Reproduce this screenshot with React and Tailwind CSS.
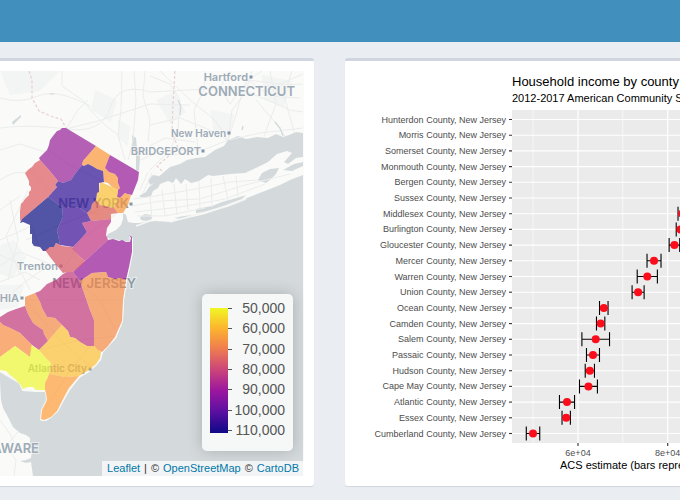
const counties = [
  { name: "Sussex", fill: "#961e98", d: "60,130 62,128 66,128 96,146 83,161 82,165 75,174 71,180 68,181 63,183 58,181 49,170 40,160 39,158 43,154 47,150 49,145 50,140 53,136 57,131" },
  { name: "Passaic", fill: "#fb9639", d: "96,146 110,155 105,168 109,172 115,174 118,178 118,183 120,188 118,190 112,187 108,183 104,182 103,171 97,169 92,166 88,164 84,166 82,165 83,161" },
  { name: "Bergen", fill: "#941797", d: "110,155 139,172 138,180 132,195 127,194 125,193 120,198 117,197 118,190 120,188 118,183 118,178 115,174 109,172 105,168" },
  { name: "Hudson", fill: "#fb9639", d: "125,193 127,194 131,195 128,205 123,213 118,213 114,208 117,202 118,197 120,198" },
  { name: "Essex", fill: "#fbbe35", d: "100,182 105,184 112,187 118,190 117,197 118,197 117,202 114,208 108,207 100,205 96,200 97,193 99,192" },
  { name: "Union", fill: "#dd5b4e", d: "92,204 96,200 100,205 108,207 114,208 118,213 111,214 111,219 91,221 87,213 91,209" },
  { name: "Morris", fill: "#2c0e95", d: "82,165 84,166 88,164 92,166 97,169 103,171 104,182 99,183 99,192 97,193 96,200 92,204 91,209 87,213 80,208 63,207 62,207 48,197 57,187 55,185 58,181 63,183 68,181 71,180 75,174" },
  { name: "Somerset", fill: "#390b96", d: "62,207 63,207 80,208 87,213 91,221 82,223 87,232 78,242 73,247 60,245 57,230 63,217" },
  { name: "Hunterdon", fill: "#0a0d81", d: "48,197 62,207 63,217 57,230 60,245 56,243 54,247 50,247 46,251 43,251 40,247 34,246 32,243 32,234 30,234 30,225 23,222 20,223 22,219 35,208" },
  { name: "Warren", fill: "#dd5a61", d: "40,160 49,170 58,181 55,185 57,187 48,197 35,208 20,221 20,211 21,204 23,202 25,199 29,195 29,192 31,190 31,187 29,185 29,181 27,177 25,173 29,169 32,167 35,163" },
  { name: "Middlesex", fill: "#c13383", d: "82,223 91,221 111,219 111,222 107,228 106,235 108,240 85,261 78,255 72,248 78,242 87,232" },
  { name: "Monmouth", fill: "#941797", d: "108,240 113,239 119,241 122,240 126,242 130,242 131,238 129,235 132,237 132,252 129,267 126,280 121,278 115,279 108,277 106,272 92,273 80,281 73,272 85,261" },
  { name: "Mercer", fill: "#d65462", d: "45,250 50,247 54,247 56,243 60,245 62,246 72,247 78,255 85,261 83,264 73,272 67,272 63,273 58,267 50,257" },
  { name: "Burlington", fill: "#c1387c", d: "67,272 73,272 80,281 90,310 94,320 94,346 87,346 80,342 75,338 70,337 68,331 62,325 55,318 47,317 42,308 40,302 35,293 40,291 47,284 56,280 63,274" },
  { name: "Ocean", fill: "#f48946", d: "80,281 92,273 106,272 108,277 115,279 121,278 126,280 123,300 122,321 115,337 108,346 102,352 98,350 94,346 94,320 90,310" },
  { name: "Camden", fill: "#f48946", d: "25,297 35,293 40,302 42,308 47,317 55,318 62,325 48,341 44,334 43,330 37,326 33,323 28,314 25,306" },
  { name: "Gloucester", fill: "#c1387c", d: "0,317 8,312 16,309 25,306 28,314 33,323 37,326 43,330 44,334 48,341 39,350 32,345 20,333 10,328 3,325 0,322" },
  { name: "Salem", fill: "#f88b41", d: "0,322 3,325 10,328 20,333 32,345 30,357 15,346 0,357" },
  { name: "Cumberland", fill: "#edf632", d: "0,357 15,346 30,357 31,345 39,350 45,357 51,363 49,374 48,377 45,383 45,390 36,390 33,387 28,387 23,389 20,384 15,379 10,375 6,371 0,370" },
  { name: "Atlantic", fill: "#fbbe35", d: "39,350 48,341 62,325 68,331 70,337 75,338 80,342 87,346 94,346 101,352 100,358 96,364 89,370 79,376 65,377 49,374 51,363 45,357" },
  { name: "Cape May", fill: "#fe9c39", d: "49,374 65,377 79,376 69,388 63,399 57,411 51,417 44,420 41,419 42,410 47,400 46,393 45,390 45,383 48,377" },
];

const roads = [
  "M0,128 Q30,124 66,129 T110,108 T150,92 L303,84",
  "M0,98 Q20,104 38,96 T90,106 M62,71 L62,86 L84,101 L92,112 L105,125 L118,135 L125,160",
  "M66,129 L78,110 L88,100 M122,71 L121,110 L118,135 M134,71 L136,100 L133,140 L128,160",
  "M145,71 L143,96 L150,120 L148,142 M66,129 L98,121 L150,104 L190,105",
  "M0,150 L20,144 L45,152 M0,180 Q15,170 25,173 M0,210 L20,196 M0,240 L32,226 L40,250",
  "M0,266 L20,252 L45,262 L60,270 M0,282 L25,272 L40,280 M5,300 L22,284 L42,270",
  "M10,200 L18,240 L8,280 M28,190 L6,236 L20,275 M0,255 L16,262 L30,290",
  "M150,76 L170,84 L180,100 L178,130 L170,150 M160,71 L190,100 L215,120 L228,140",
  "M228,140 L236,115 L240,100 L248,80 L262,71 M228,140 L232,110 L246,92 L252,71",
  "M150,125 L180,118 L210,130 L226,139 M205,71 L204,90 L194,110 L198,150",
  "M228,140 L260,133 L303,128 M256,100 L275,122 L285,136 M248,92 L290,110 L303,112",
  "M248,80 L280,84 L303,74 M230,71 L220,88 L230,104 L248,80 L270,96 L300,98",
  "M140,160 L160,152 L180,150 L203,150 L228,140 M150,170 L165,155 L190,154",
  "M270,71 L276,104 L264,136 M292,71 L284,95 L294,132 M150,146 L165,138 L195,142",
  "M132,206 L160,201 L200,199 L245,185 L290,174 M135,212 L180,207 L225,199 L265,184",
  "M133,199 L155,196 L190,190 L230,182 L258,180 M137,216 L165,216 L205,208",
  "M150,197 L152,218 M162,190 L165,216 M174,184 L177,215 M186,184 L188,210 M199,181 L200,208 M211,178 L212,207 M223,176 L228,200 M236,176 L238,197",
  "M148,172 L140,190 M152,173 L143,193 M18,432 L6,446 L16,460 L14,476 M0,420 L10,434 L18,450 L28,452",
  "M48,150 L70,165 L100,180 L128,204 M30,170 L60,200 L100,215 M62,273 L80,240 L128,205",
  "M26,240 L60,225 L98,210 M62,270 L100,300 L115,330 M25,300 L60,340 L92,368",
  "M25,300 L70,300 L120,300 M40,350 L80,340 L116,336 M45,410 L70,370 L95,340",
];

const cityDots = [
  [251, 77], [229, 133], [203, 151], [131, 204], [61, 266], [22, 298], [90, 369],
];

const legendStops = ["50,000", "60,000", "70,000", "80,000", "90,000", "100,000", "110,000"];

const estimates = [
  { county: "Hunterdon" },
  { county: "Morris" },
  { county: "Somerset" },
  { county: "Monmouth" },
  { county: "Bergen" },
  { county: "Sussex" },
  { county: "Middlesex", value: 83200, moe: 900 },
  { county: "Burlington", value: 82850, moe: 950 },
  { county: "Gloucester", value: 81500, moe: 1180 },
  { county: "Mercer", value: 76950, moe: 1560 },
  { county: "Warren", value: 75450, moe: 2250 },
  { county: "Union", value: 73400, moe: 1340 },
  { county: "Ocean", value: 65750, moe: 950 },
  { county: "Camden", value: 65050, moe: 930 },
  { county: "Salem", value: 63950, moe: 3080 },
  { county: "Passaic", value: 63340, moe: 1450 },
  { county: "Hudson", value: 62640, moe: 1030 },
  { county: "Cape May", value: 62330, moe: 2000 },
  { county: "Atlantic", value: 57550, moe: 1680 },
  { county: "Essex", value: 57370, moe: 930 },
  { county: "Cumberland", value: 49970, moe: 1500 },
];

const PANEL = { left: 167, top: 39, bottom: 372, right: 1200 };
const xAt = (v) => 233 + ((v - 60000) / 20000) * 89.7;
const yAt = (i) => 48.5 + i * 15.7;

function IncomeMap() {
  return (
    <svg
      viewBox="0 71 304 405"
      preserveAspectRatio="xMaxYMin slice"
      className="block h-[405px] w-full font-['Inter',sans-serif] font-semibold"
      role="img"
      aria-label="Household income map of New Jersey"
    >
      <rect x="0" y="71" width="304" height="405" fill="#fafaf8" />
      <g fill="#f3f5f4">
        <path d="M0,71h60l-20,20l-30,4zM95,90l22,10l-6,22l-20,-12zM156,100l18,-8l12,20l-16,12zM210,110l24,4l-4,22l-16,-4zM262,75l30,6l-8,26l-20,-8z" />
        <path d="M0,245l14,-5l12,18l-14,20l-12,-4zM118,120l12,6l-2,20l-10,-8zM0,285l24,0l-6,22l-18,3z" />
      </g>

      <g fill="#d4dadc">
        <path d="M303,133 L296,132 L289,135 L283,137 L276,134 L268,138 L257,137 L246,139 L238,136 L228,140 L224,146 L215,150 L205,157 L196,158 L187,160 L180,164 L170,167 L163,173 L157,178 L153,184 L149,187 L146,192 L139,196 L143,198 L151,196 L153,191 L158,188 L160,184 L168,181 L173,183 L176,178 L181,184 L185,179 L191,183 L199,181 L208,175 L213,176 L230,174 L245,173 L258,167 L268,162 L277,154 L287,151 L292,153 L284,162 L288,164 L296,158 L303,157 Z" />
        <path d="M303,175 L290,180 L280,185 L270,189 L257,194 L247,198 L234,204 L220,209 L205,214 L197,216 L183,219 L170,222 L155,221 L146,222 L139,223 L133,223 L128,222 L126,215 L123,213 L123,219 L121,225 L116,230 L108,234 L106,238 L113,239 L130,242 L129,235 L132,237 L133,252 L130,267 L127,280 L124,300 L123,321 L116,338 L103,352 L101,358 L97,365 L90,371 L80,377 L70,390 L64,400 L58,411 L51,418 L44,421 L40,420 L41,410 L46,400 L45,391 L36,391 L23,390 L19,383 L10,376 L0,371 L0,382 L1,400 L3,408 L8,417 L13,427 L20,433 L26,435 L30,438 L30,444 L32,450 L31,458 L26,460 L20,461 L26,463 L31,462 L33,476 L303,476 Z" />
        <path d="M258,180 L262,173 L270,169 L279,168 L276,174 L271,179 L266,183 Z M283,170 L294,164 L303,162 L303,166 L292,171 Z" />
        <path d="M196,209 L212,206 L222,202 L240,197 L246,195 L242,199 L226,205 L205,212 L196,213 Z M140,217 l5,-3 l6,1 l1,4 l-6,2 l-5,-1 Z M174,218 l10,-2 l10,-1 l-12,4 Z" />
        <path d="M148,180 l5,-5 l6,1 l-3,6 l-6,3 Z M132,135 l4,3 l1,10 l3,9 l-1,14 l-3,-1 l0,-14 l-4,-11 Z M12,122 l5,-4 l4,-3 l0,2 l-4,4 l-4,4 Z" />
      </g>

      <path d="M136,226 L150,221 M170,222 L202,213 L228,206 L246,199" fill="none" stroke="#f5f5f3" strokeWidth="1.5" />

      <g fill="none" stroke="#ebeded" strokeWidth="1">
        {roads.map((d) => (
          <path key={d} d={d} />
        ))}
      </g>
      <g fill="none" stroke="#cfd9dd" strokeWidth="1.2">
        <path d="M178,100 l3,7 l-1,8 M275,122 l5,6 l3,8 M243,126 l-1,4 M50,94 l4,0" />
      </g>
      <g fill="none" stroke="#e9d0d3" strokeWidth="1.2" strokeDasharray="3 2">
        <path d="M29,71 L32,80 L32,98 L39,111 L53,117 L61,119 L66,128" />
        <path d="M175,71 L173,104 L172,132 L178,148 L157,166 L163,172" />
      </g>

      <path
        d="M132,238 L132,252 L129,267 L126,280 L123,300 L122,321 L115,338 L102,352 L100,360 L89,371 L79,377 L69,389 L57,411 L46,420 L41,420 M0,371 L20,383 L23,390 L36,391 L45,391"
        fill="none"
        stroke="#f8f8f6"
        strokeWidth="2"
      />

      <g fill="#9eabb7" stroke="#fafaf8" strokeWidth="2" strokeOpacity="0.6" paintOrder="stroke" textAnchor="end">
        <text x="248" y="81" className="text-[11px]">Hartford</text>
        <text x="295" y="96" className="text-[13px]">CONNECTICUT</text>
        <text x="226" y="137" className="text-[10px]">New Haven</text>
        <text x="201" y="155" className="text-[11px]">BRIDGEPORT</text>
        <text x="129" y="208" className="text-[13px]" fill="#8b98a4" strokeOpacity="0">NEW YORK</text>
        <text x="58" y="270" className="text-[11px]">Trenton</text>
        <text x="136" y="288" className="text-[13px]" fill="#8b98a4">NEW JERSEY</text>
        <text x="19" y="302" className="text-[11px]">PHILADELPHIA</text>
        <text x="87" y="372" className="text-[10px]" fill="#8b98a4" strokeOpacity="0">Atlantic City</text>
        <text x="39" y="453" className="text-[13px]">DELAWARE</text>
      </g>
      <g fill="#8696a5">
        {cityDots.map(([x, y]) => (
          <rect key={`${x}-${y}`} x={x - 1.5} y={y - 1.5} width="3" height="3" />
        ))}
      </g>

      <g fillOpacity="0.7">
        {counties.map((c) => (
          <polygon key={c.name} points={c.d} fill={c.fill} />
        ))}
      </g>
    </svg>
  );
}

function Legend() {
  return (
    <div className="absolute top-[223px] right-[11px] flex h-[157px] w-[91px] rounded-[5px] bg-white/80 px-2 pt-1 shadow-[0_0_15px_rgba(0,0,0,0.2)]">
      <div className="mt-[10px] h-[125px] w-[18px] shrink-0 bg-[linear-gradient(to_bottom,#f0f724,#fdb52e_16%,#ee7b51_33%,#cc4678_49%,#9c179e_66%,#5f10a2_82%,#0d0887)]" />
      <div className="mt-[10px] flex h-[123px] w-1 shrink-0 flex-col justify-between">
        {legendStops.map((s) => (
          <span key={s} className="h-px w-full bg-[#555]" />
        ))}
      </div>
      <div className="flex h-[142px] grow flex-col justify-between text-right text-[14px] leading-5 text-[#555]">
        {legendStops.map((s) => (
          <span key={s}>{s}</span>
        ))}
      </div>
    </div>
  );
}

function Attribution() {
  return (
    <div className="absolute right-0 bottom-0 flex gap-1 bg-white/70 px-[5px] text-[11px] leading-[15px] whitespace-nowrap text-[#333]">
      <a href="#leaflet" className="text-[#0078a8]">Leaflet</a>
      <span>|</span>
      <span>©</span>
      <a href="#osm" className="text-[#0078a8]">OpenStreetMap</a>
      <span>©</span>
      <a href="#carto" className="text-[#0078a8]">CartoDB</a>
    </div>
  );
}

function IncomeChart() {
  return (
    <svg className="block h-[405px] w-full" role="img" aria-label="Household income by county">
      <text x="167" y="15" className="text-[13px]" fill="#000">Household income by county</text>
      <text x="167" y="31" className="text-[11px]" fill="#000">2012-2017 American Community Survey</text>
      <rect x={PANEL.left} y={PANEL.top} width={PANEL.right - PANEL.left} height={PANEL.bottom - PANEL.top} fill="#ebebeb" />
      <g stroke="#fff">
        {[50000, 70000].map((v) => (
          <line key={v} x1={xAt(v)} x2={xAt(v)} y1={PANEL.top} y2={PANEL.bottom} strokeWidth="0.6" />
        ))}
        {[60000, 80000].map((v) => (
          <line key={v} x1={xAt(v)} x2={xAt(v)} y1={PANEL.top} y2={PANEL.bottom} strokeWidth="1.2" />
        ))}
        {estimates.map((e, i) => (
          <line key={e.county} x1={PANEL.left} x2={PANEL.right} y1={yAt(i)} y2={yAt(i)} strokeWidth="1.1" />
        ))}
      </g>
      {estimates.map((e, i) => (
        <g key={e.county}>
          <text x="161" y={yAt(i) + 3} textAnchor="end" className="text-[9px]" fill="#4d4d4d">
            {e.county} County, New Jersey
          </text>
          <line x1="164" x2="167" y1={yAt(i)} y2={yAt(i)} stroke="#333" strokeWidth="1.1" />
          {e.value && (
            <>
              <path
                d={`M${xAt(e.value - e.moe)},${yAt(i) - 7}v14m0,-7H${xAt(e.value + e.moe)}m0,-7v14`}
                fill="none"
                stroke="#000"
                strokeWidth="1.1"
              />
              <circle cx={xAt(e.value)} cy={yAt(i)} r="4" fill="#fb0d1b" />
            </>
          )}
        </g>
      ))}
      {[60000, 80000].map((v) => (
        <g key={v}>
          <line x1={xAt(v)} x2={xAt(v)} y1={PANEL.bottom} y2={PANEL.bottom + 3} stroke="#333" strokeWidth="1.1" />
          <text x={xAt(v)} y="385" textAnchor="middle" className="text-[9px]" fill="#4d4d4d">
            {`${v / 10000}e+04`}
          </text>
        </g>
      ))}
      <text x="215" y="398" className="text-[11px]" fill="#000">ACS estimate (bars represent margin of error)</text>
    </svg>
  );
}

export default function App() {
  return (
    <div className="min-h-screen overflow-hidden bg-[#eaeef3] font-['Liberation_Sans',Arial,sans-serif]">
      <header className="h-[42px] bg-[#418fbc]" />
      <main className="grid grid-cols-[314fr_335fr] gap-[31px] pt-4">
        <section className="min-w-0 rounded-r-[3px] border-t-[3px] border-[#d1d5e0] bg-white py-[10px] pr-[10px] shadow-[0_1px_1px_rgba(0,0,0,0.1)]">
          <div className="relative overflow-hidden">
            <IncomeMap />
            <Legend />
            <Attribution />
          </div>
        </section>
        <section className="min-w-0 overflow-hidden rounded-l-[3px] border-t-[3px] border-[#d1d5e0] bg-white py-[10px] shadow-[0_1px_1px_rgba(0,0,0,0.1)]">
          <IncomeChart />
        </section>
      </main>
    </div>
  );
}
